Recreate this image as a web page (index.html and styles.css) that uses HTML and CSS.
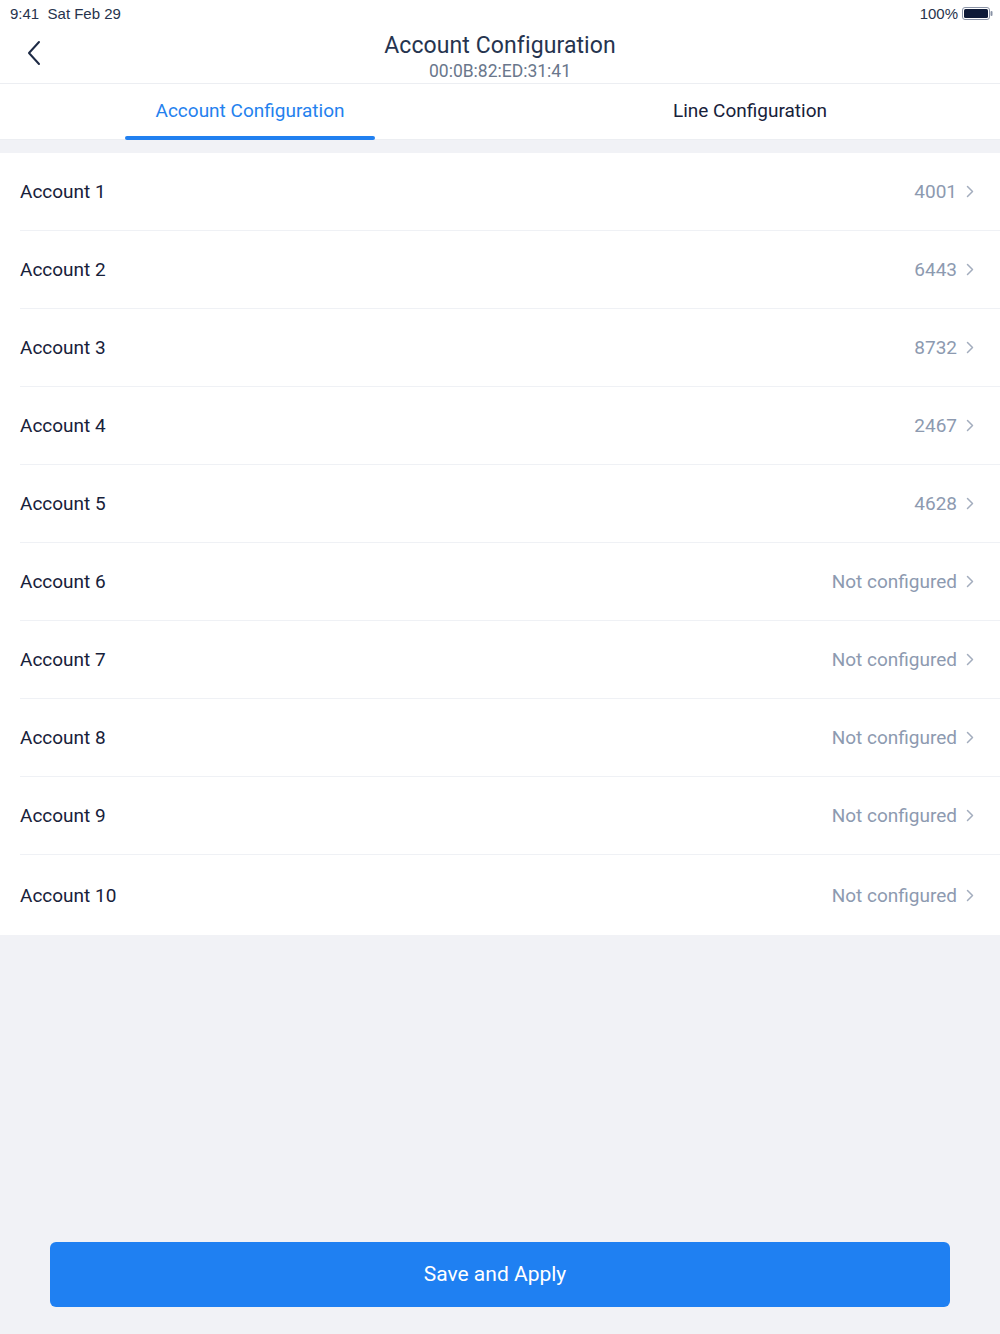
FILE: index.html
```html
<!DOCTYPE html>
<html lang="en">
<head>
    <meta charset="UTF-8">
    <meta name="viewport" content="width=device-width, initial-scale=1.0">
    <title>Account Configuration</title>
    <link rel="stylesheet" href="styles.css">
</head>
<body>
    <div id="page">
        <div class="status-bar">
            <span class="time">9:41&nbsp;&nbsp;Sat Feb 29</span>
            <span class="battery">100%
                <svg width="31" height="13" viewBox="0 0 31 13">
                    <rect x="0.5" y="0.5" width="27" height="12" rx="2.5" fill="none" stroke="#8a93a6" stroke-width="1"/>
                    <rect x="2" y="2" width="24" height="9" rx="1.5" fill="#0e1a38"/>
                    <rect x="28.5" y="4" width="2" height="5" rx="1" fill="#8a93a6"/>
                </svg>
            </span>
        </div>

        <div class="nav">
            <div class="back">
                <svg width="16" height="26" viewBox="0 0 16 26">
                    <path d="M13 2 L3 13 L13 24" fill="none" stroke="#1d2a45" stroke-width="2" stroke-linecap="round" stroke-linejoin="round"/>
                </svg>
            </div>
            <div class="nav-title">
                <div class="title">Account Configuration</div>
                <div class="subtitle">00:0B:82:ED:31:41</div>
            </div>
        </div>

        <ul class="tabs">
            <li class="active">Account Configuration</li>
            <li>Line Configuration</li>
        </ul>

        <ul class="list">
            <li><span class="name">Account 1</span><span class="value">4001</span><svg class="arrow" width="8" height="13" viewBox="0 0 8 13"><path d="M1.5 1.5 L6.5 6.5 L1.5 11.5"/></svg></li>
            <li><span class="name">Account 2</span><span class="value">6443</span><svg class="arrow" width="8" height="13" viewBox="0 0 8 13"><path d="M1.5 1.5 L6.5 6.5 L1.5 11.5"/></svg></li>
            <li><span class="name">Account 3</span><span class="value">8732</span><svg class="arrow" width="8" height="13" viewBox="0 0 8 13"><path d="M1.5 1.5 L6.5 6.5 L1.5 11.5"/></svg></li>
            <li><span class="name">Account 4</span><span class="value">2467</span><svg class="arrow" width="8" height="13" viewBox="0 0 8 13"><path d="M1.5 1.5 L6.5 6.5 L1.5 11.5"/></svg></li>
            <li><span class="name">Account 5</span><span class="value">4628</span><svg class="arrow" width="8" height="13" viewBox="0 0 8 13"><path d="M1.5 1.5 L6.5 6.5 L1.5 11.5"/></svg></li>
            <li><span class="name">Account 6</span><span class="value">Not configured</span><svg class="arrow" width="8" height="13" viewBox="0 0 8 13"><path d="M1.5 1.5 L6.5 6.5 L1.5 11.5"/></svg></li>
            <li><span class="name">Account 7</span><span class="value">Not configured</span><svg class="arrow" width="8" height="13" viewBox="0 0 8 13"><path d="M1.5 1.5 L6.5 6.5 L1.5 11.5"/></svg></li>
            <li><span class="name">Account 8</span><span class="value">Not configured</span><svg class="arrow" width="8" height="13" viewBox="0 0 8 13"><path d="M1.5 1.5 L6.5 6.5 L1.5 11.5"/></svg></li>
            <li><span class="name">Account 9</span><span class="value">Not configured</span><svg class="arrow" width="8" height="13" viewBox="0 0 8 13"><path d="M1.5 1.5 L6.5 6.5 L1.5 11.5"/></svg></li>
            <li><span class="name">Account 10</span><span class="value">Not configured</span><svg class="arrow" width="8" height="13" viewBox="0 0 8 13"><path d="M1.5 1.5 L6.5 6.5 L1.5 11.5"/></svg></li>
        </ul>

        <div class="footer">
            <div class="btn">Save and Apply</div>
        </div>
    </div>
</body>
</html>
```

FILE: styles.css
```css
*{
    margin: 0;
    padding: 0;
    list-style: none;
    box-sizing: border-box;
}
body{
    background-color: #f1f2f6;
    font-family: Roboto, "Noto Sans", sans-serif;
    color: #1a2640;
}
#page{
    display: flex;
    flex-direction: column;
    min-height: 100vh;
}
.status-bar{
    display: flex;
    justify-content: space-between;
    align-items: center;
    height: 28px;
    padding: 0 7px 2px 10px;
    background-color: #ffffff;
    font-family: "Liberation Sans", Arial, sans-serif;
    font-size: 15px;
    color: #27334d;
}
.battery{
    display: flex;
    align-items: center;
    gap: 4px;
}
.nav{
    position: relative;
    height: 56px;
    background-color: #ffffff;
    border-bottom: 1px solid #eceef2;
}
.back{
    position: absolute;
    left: 26px;
    top: 12px;
}
.nav-title{
    text-align: center;
}
.title{
    font-size: 23px;
    line-height: 24px;
    padding-top: 6px;
    color: #26344f;
    letter-spacing: 0.1px;
}
.subtitle{
    font-size: 17.5px;
    line-height: 20px;
    padding-top: 3px;
    color: #6a778c;
}
.tabs{
    display: flex;
    height: 56px;
    background-color: #ffffff;
    border-bottom: 1px solid #eceef2;
}
.tabs li{
    flex: 1;
    position: relative;
    text-align: center;
    font-size: 19px;
    line-height: 54px;
    color: #17213a;
}
.tabs li.active{
    color: #2481ee;
}
.tabs li.active::after{
    content: "";
    position: absolute;
    left: 125px;
    right: 125px;
    bottom: -1px;
    height: 4px;
    border-radius: 2px;
    background-color: #2180f0;
}
.list{
    margin-top: 13px;
    background-color: #ffffff;
}
.list li{
    display: flex;
    align-items: center;
    height: 78px;
    margin-left: 20px;
    padding-right: 26px;
    border-bottom: 1px solid #eff1f5;
    font-size: 19px;
}
.list li:last-child{
    height: 80px;
    border-bottom: none;
}
.name{
    flex: 1;
    color: #17213a;
}
.value{
    color: #8d9ab0;
}
.arrow{
    margin-left: 9px;
    fill: none;
    stroke: #a3adbe;
    stroke-width: 1.5;
    stroke-linecap: round;
    stroke-linejoin: round;
}
.footer{
    margin-top: auto;
    padding: 0 50px 27px;
}
.btn{
    height: 65px;
    border-radius: 6px;
    background-color: #1f80f2;
    color: #ffffff;
    font-size: 21px;
    line-height: 65px;
    text-align: center;
    padding-right: 10px;
}
```
